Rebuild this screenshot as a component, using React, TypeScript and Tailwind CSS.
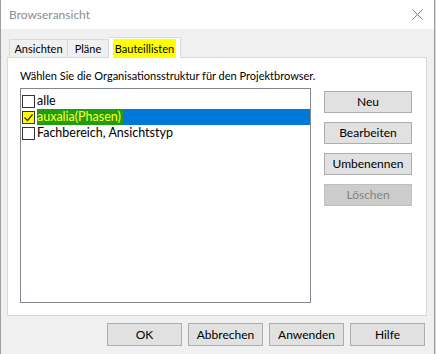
import React from 'react';

interface BtnProps {
  label: string;
  disabled?: boolean;
  className?: string;
}

// Windows-Standardbutton
const Btn: React.FC<BtnProps> = ({ label, disabled = false, className = '' }) => (
  <button
    disabled={disabled}
    className={
      'flex items-center justify-center border text-[12px] leading-none ' +
      (disabled
        ? 'bg-[#cccccc] border-[#bfbfbf] text-[#838383] '
        : 'bg-[#e1e1e1] border-[#adadad] text-black ') +
      className
    }
  >
    {label}
  </button>
);

const Box: React.FC<{ checked?: boolean; marked?: boolean }> = ({ checked = false, marked = false }) => (
  <div
    className={
      'w-[13px] h-[13px] border border-[#333333] flex items-center justify-center shrink-0 ' +
      (marked ? 'bg-[#ffff00]' : 'bg-white')
    }
  >
    {checked && (
      <svg width="11" height="11" viewBox="0 0 11 11">
        <path d="M1.5 5.5 L4.5 8.5 L9.5 2.5" stroke="#333300" strokeWidth="1.3" fill="none" />
      </svg>
    )}
  </div>
);

export default function App() {
  return (
    <div className="w-[436px] h-[354px] flex bg-[#d4d4d4] font-['Lato',sans-serif] text-[12px] text-black overflow-hidden">
      <div className="w-[435px] h-full flex flex-col border-l border-r border-[#9e9e9e]">
        {/* Titelleiste */}
        <div className="h-[29px] bg-white flex items-center justify-between pl-[8px] pr-[10px] shrink-0">
          <span className="text-[#8c8c8c] text-[12px]">Browseransicht</span>
          <svg width="11" height="11" viewBox="0 0 11 11" className="mr-[1px]">
            <path d="M0.5 0.5 L10.5 10.5 M10.5 0.5 L0.5 10.5" stroke="#7a7a7a" strokeWidth="1" fill="none" />
          </svg>
        </div>

        <div className="flex-1 bg-[#f0f0f0] flex flex-col px-[6px] pt-[7px]">
          {/* Reiter */}
          <div className="flex items-end h-[21px] ml-[2px] relative z-10 text-[11px]">
            <div className="w-[59px] h-[18px] border border-b-0 border-[#d9d9d9] bg-[#f0f0f0] flex items-center justify-center pt-[1px]">
              Ansichten
            </div>
            <div className="w-[41px] h-[18px] border border-b-0 border-l-0 border-[#d9d9d9] bg-[#f0f0f0] flex items-center justify-center pt-[1px]">
              Pläne
            </div>
            <div className="w-[72px] h-[21px] -mb-[1px] border border-b-0 border-l-0 border-[#d9d9d9] bg-white flex items-center justify-center">
              <span className="bg-[#ffff00] px-[2px] leading-[19px]">Bauteillisten</span>
            </div>
          </div>

          {/* Register-Inhalt */}
          <div className="w-[420px] h-[259px] bg-white border border-[#d9d9d9] flex flex-col pl-[12px] pt-[10px]">
            <div className="h-[16px] leading-[16px] text-[11px]">
              Wählen Sie die Organisationsstruktur für den Projektbrowser.
            </div>
            <div className="flex mt-[4px]">
              <div className="w-[291px] h-[215px] border border-[#828790] bg-white pt-[4px] pl-[1px] text-[12.5px]">
                <div className="flex items-center h-[16px]">
                  <Box />
                  <span className="ml-[2px]">alle</span>
                </div>
                <div className="flex items-center h-[16px]">
                  <Box checked marked />
                  <div className="flex-1 h-full flex items-center bg-[#0078d7] ml-[2px]">
                    <span className="bg-[#1f9e14] text-[#ffff30] h-full leading-[16px] pr-[2px]">auxalia(Phasen)</span>
                  </div>
                </div>
                <div className="flex items-center h-[16px]">
                  <Box />
                  <span className="ml-[2px]">Fachbereich, Ansichtstyp</span>
                </div>
              </div>

              <div className="flex flex-col gap-[9px] ml-[13px] mt-[3px]">
                <Btn label="Neu" className="w-[88px] h-[22px]" />
                <Btn label="Bearbeiten" className="w-[88px] h-[22px]" />
                <Btn label="Umbenennen" className="w-[88px] h-[22px]" />
                <Btn label="Löschen" disabled className="w-[88px] h-[22px]" />
              </div>
            </div>
          </div>

          {/* Dialogknöpfe */}
          <div className="flex justify-end gap-[6px] mt-[7px] pr-[3px]">
            <Btn label="OK" className="w-[75px] h-[23px]" />
            <Btn label="Abbrechen" className="w-[75px] h-[23px]" />
            <Btn label="Anwenden" className="w-[75px] h-[23px]" />
            <Btn label="Hilfe" className="w-[75px] h-[23px]" />
          </div>
        </div>
      </div>
    </div>
  );
}
